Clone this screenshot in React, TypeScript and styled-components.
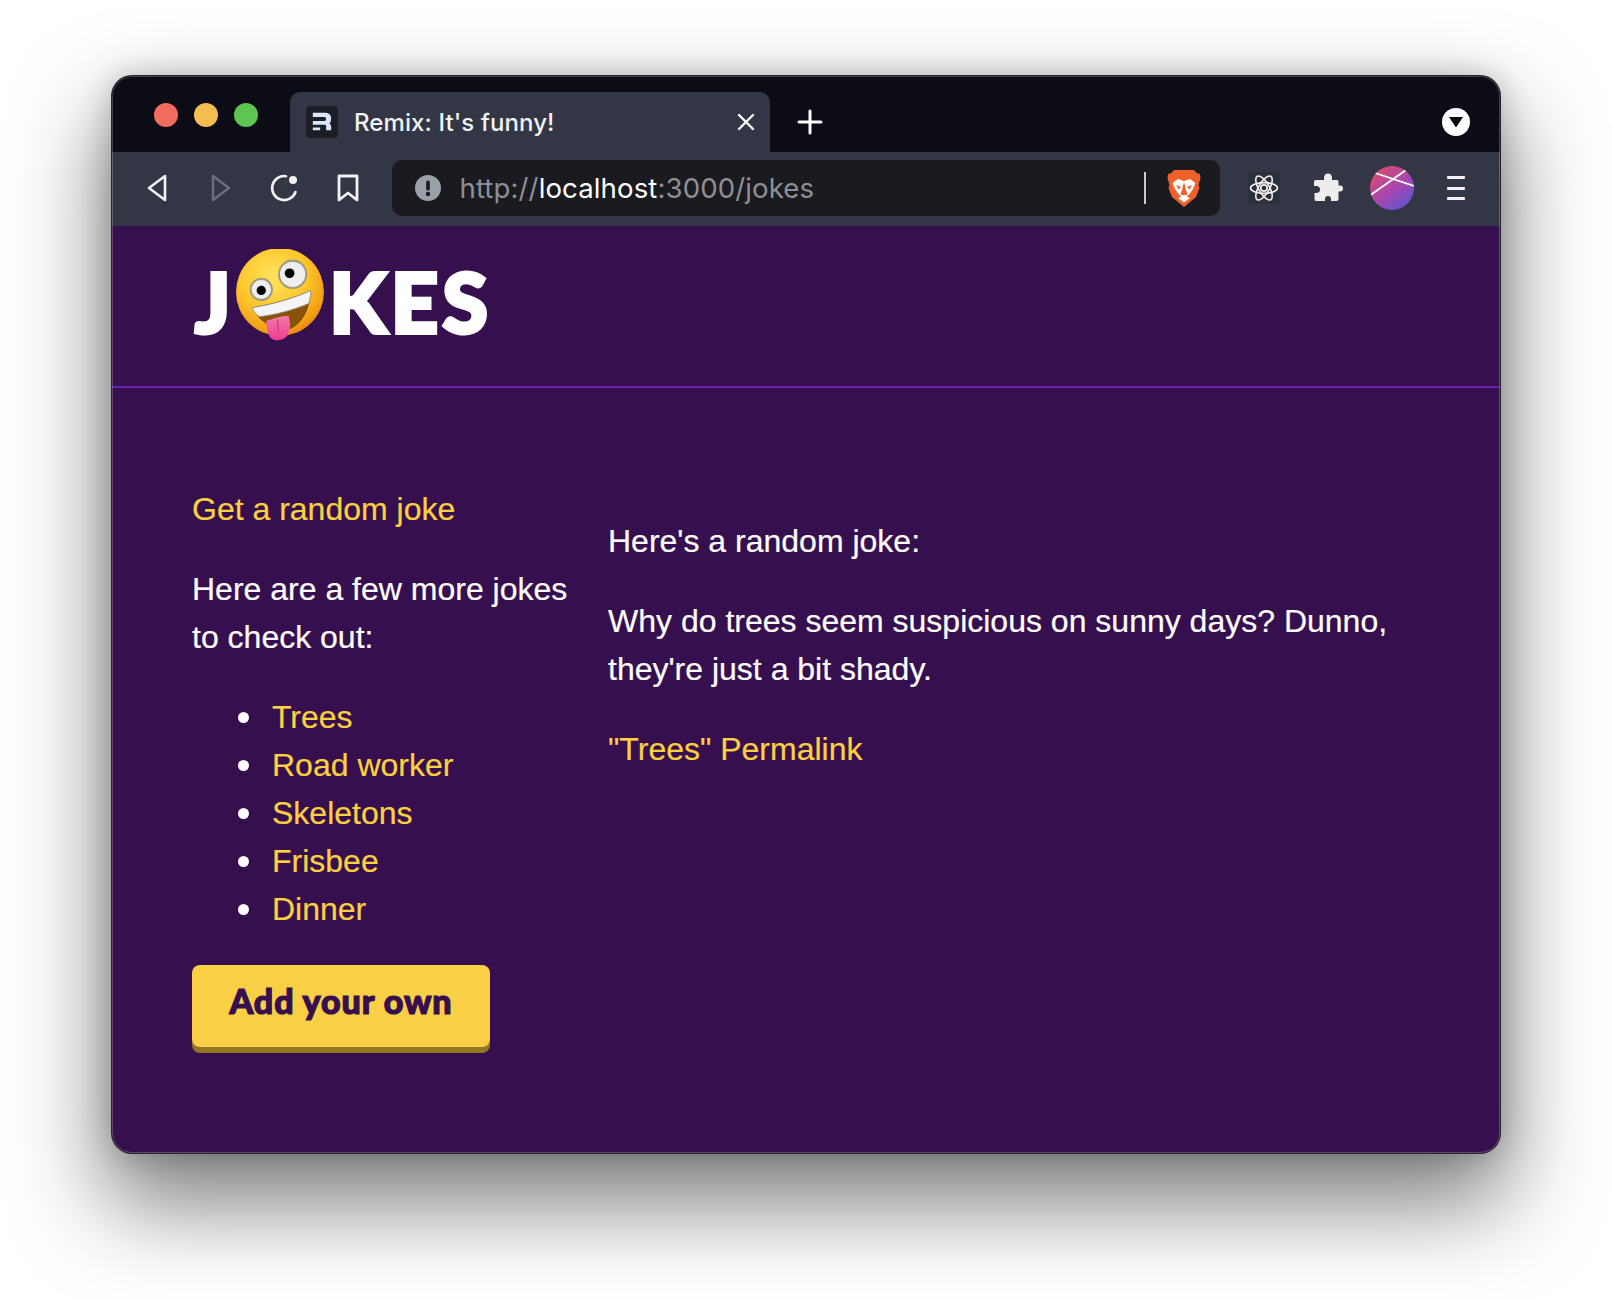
import React from "react";
import styled, { createGlobalStyle } from "styled-components";

const Global = createGlobalStyle`
  html, body { margin: 0; padding: 0; background: #fff; }
  body { font-family: "Liberation Sans", Arial, sans-serif; }
`;

const Page = styled.div`
  width: 1612px;
  height: 1300px;
  padding: 76px 112px 0;
  box-sizing: border-box;
  overflow: hidden;
`;

const Win = styled.div`
  width: 1388px;
  height: 1077px;
  border-radius: 20px;
  background: #360f4f;
  overflow: hidden;
  display: flex;
  flex-direction: column;
  position: relative;
  box-shadow: 0 0 0 1px #26262a, 0 44px 90px 8px rgba(0, 0, 0, 0.5), 0 0 30px rgba(0, 0, 0, 0.22);
  &::after {
    content: "";
    position: absolute;
    inset: 0;
    border-radius: 20px;
    box-shadow: inset 0 0 0 1px rgba(255, 255, 255, 0.22);
    pointer-events: none;
  }
`;

const TabBar = styled.div`
  height: 76px;
  flex: none;
  background: #0b0c15;
  display: flex;
  align-items: flex-end;
  position: relative;
`;

const Lights = styled.div`
  width: 178px;
  height: 76px;
  flex: none;
  display: flex;
  align-items: flex-start;
  gap: 16px;
  padding: 27px 0 0 42px;
  box-sizing: border-box;
`;

const Light = styled.span<{ $c: string }>`
  width: 24px;
  height: 24px;
  border-radius: 50%;
  background: ${(p) => p.$c};
`;

const Tab = styled.div`
  width: 480px;
  height: 60px;
  flex: none;
  background: #333644;
  border-radius: 10px 10px 0 0;
  display: flex;
  align-items: center;
  padding: 0 14px 0 16px;
  box-sizing: border-box;
  color: #fff;
`;

const Favicon = styled.div`
  width: 32px;
  height: 32px;
  border-radius: 4px;
  background: #1c1e26;
  margin-right: 16px;
  flex: none;
  display: flex;
  align-items: center;
  justify-content: center;
`;

const TabTitle = styled.div`
  flex: 1;
  font-family: "Inter", sans-serif;
  font-size: 24px;
  font-weight: 500;
  letter-spacing: 0.1px;
  color: #f2f3f6;
`;

const NewTab = styled.div`
  width: 38px;
  height: 60px;
  margin-left: 21px;
  display: flex;
  align-items: center;
  justify-content: center;
`;

const TabMenu = styled.div`
  position: absolute;
  right: 30px;
  top: 32px;
  width: 28px;
  height: 28px;
  border-radius: 50%;
  background: #fff;
  display: flex;
  align-items: center;
  justify-content: center;
`;

const Toolbar = styled.div`
  height: 74px;
  flex: none;
  background: #333644;
  display: flex;
  align-items: center;
  padding: 0 28px 2px 29px;
  box-sizing: border-box;
  gap: 31.5px;
`;

const Slot = styled.div`
  width: 32px;
  height: 44px;
  flex: none;
  display: flex;
  align-items: center;
  justify-content: center;
`;

const UrlBar = styled.div`
  flex: none;
  width: 828px;
  height: 56px;
  margin: 0 -3.5px;
  background: #1a1b20;
  border-radius: 10px;
  display: flex;
  align-items: center;
  padding: 0 19px 0 23px;
  box-sizing: border-box;
`;

const UrlText = styled.div`
  flex: 1;
  margin-left: 19px;
  font-family: "Inter", sans-serif;
  font-size: 27.6px;
  color: #8e9096;
  white-space: nowrap;
  letter-spacing: 0.1px;
`;

const Host = styled.span`
  color: #fff;
`;

const UrlDivider = styled.div`
  width: 2px;
  height: 32px;
  background: #c9cacd;
  margin-right: 21px;
`;

const Extensions = styled.div`
  display: flex;
  align-items: center;
  gap: 32px;
  margin-left: auto;
`;

const ReactBox = styled(Slot)`
  height: 32px;
  background: #2c2f3c;
  border-radius: 4px;
`;

const SiteHeader = styled.header`
  height: 162px;
  flex: none;
  box-sizing: border-box;
  border-bottom: 2px solid #6a1fb0;
  padding: 22px 0 0 80px;
`;

const Logo = styled.div`
  display: flex;
  align-items: center;
  height: 94px;
  color: #fff;
  font-family: "Lato", sans-serif;
  font-weight: 900;
  font-size: 82px;
  line-height: 92px;
  -webkit-text-stroke: 4px #fff;
`;

const LogoJ = styled.span`
  margin: 12px 5px 0 3px;
`;

const LogoRest = styled.span`
  margin: 12px 0 0 1px;
  letter-spacing: 4.5px;
`;

const Main = styled.main`
  display: grid;
  grid-template-columns: 384px 1fr;
  column-gap: 32px;
  padding: 97px 80px 0;
  font-size: 32px;
  line-height: 48px;
  color: #fff;
  -webkit-text-stroke: 0.2px currentColor;
`;

const Side = styled.div``;
const Col = styled.div`
  padding-top: 32px;
`;

const Link = styled.a`
  color: #fbd13f;
  text-decoration: none;
`;

const Para = styled.p<{ $first?: boolean }>`
  margin: ${(p) => (p.$first ? 0 : "32px 0 0")};
`;

const JokeList = styled.ul`
  margin: 32px 0 0;
  padding: 0 0 0 46px;
  list-style: none;
`;

const JokeItem = styled.li`
  display: flex;
  align-items: center;
  &::before {
    content: "";
    width: 11px;
    height: 11px;
    margin-right: 23px;
    border-radius: 50%;
    background: #fff;
  }
`;

const AddButton = styled.a`
  display: flex;
  align-items: center;
  justify-content: center;
  width: 298px;
  height: 82px;
  box-sizing: border-box;
  padding-bottom: 10px;
  margin-top: 32px;
  border-radius: 8px;
  background: #f9cf45;
  box-shadow: 0 6px 0 #937824;
  color: #360f4f;
  font-family: "Lato", sans-serif;
  font-weight: 900;
  font-size: 34px;
  letter-spacing: 0.9px;
  line-height: 1;
  -webkit-text-stroke: 1.2px #360f4f;
`;

const Face = () => (
  <svg width="93" height="93" viewBox="0 0 92 92" style={{ flex: "none" }}>
    <defs>
      <radialGradient id="fg" cx="42%" cy="33%" r="70%">
        <stop offset="0" stopColor="#ffe45e" />
        <stop offset="0.55" stopColor="#fdc62b" />
        <stop offset="0.88" stopColor="#f29f14" />
        <stop offset="1" stopColor="#e4830f" />
      </radialGradient>
      <linearGradient id="tg" x1="0" y1="0" x2="0" y2="1">
        <stop offset="0" stopColor="#f07ba8" />
        <stop offset="1" stopColor="#f23a8e" />
      </linearGradient>
    </defs>
    <circle cx="44.5" cy="42.5" r="43.5" fill="url(#fg)" />
    <path d="M18 58 C36 55 58 49 74 42 C74 60 66 72 56 78 C46 82 26 76 18 58 Z" fill="#8a5206" stroke="#7a4303" strokeWidth="1" />
    <path d="M17 58 C36 55 58 49 75 41 C75 46 74 50 73 54 C56 61 40 65 24 67 C20 64 18 61 17 58 Z" fill="#f4f4f4" stroke="#8c8c8c" strokeWidth="0.8" />
    <path d="M31 71 C38 69 46 66 53 66 C55 74 55 80 52 85 C48 92 37 92 34 86 C32 81 31 76 31 71 Z" fill="url(#tg)" />
    <path d="M42 70 L43 82" stroke="#d62a76" strokeWidth="1" fill="none" />
    <circle cx="26" cy="40" r="10.5" fill="#eee" stroke="#a39a80" strokeWidth="2" />
    <circle cx="26" cy="41" r="4.6" fill="#000" />
    <circle cx="57" cy="25" r="13.5" fill="#eee" stroke="#a39a80" strokeWidth="2" />
    <circle cx="54" cy="24" r="4.8" fill="#000" />
  </svg>
);

const Brave = () => (
  <svg width="34" height="38" viewBox="0 0 34 38" style={{ flex: "none" }}>
    <path d="M7 1 H27 L29.5 4 L33 5 L33.5 9 L31.5 16 L32.5 19 L29 28 L17 38 L5 28 L1.5 19 L2.5 16 L0.5 9 L1 5 L4.5 4 Z" fill="#f0602a" />
    <path d="M5.5 14 L11 10 L17 12 L23 10 L28.5 14 L26 20 L22.5 25 L20 27 L14 27 L11.5 25 L8 20 Z" fill="#fff" />
    <path d="M17 13 L15 21 L13.5 25 L14.5 26 H19.5 L20.5 25 L19 21 Z" fill="#f0602a" />
    <path d="M9 16 L14 18 L11.5 20.5 Z M25 16 L20 18 L22.5 20.5 Z" fill="#f0602a" />
    <path d="M11 29 L17 26 L23 29 L17 33.5 Z" fill="#fff" />
  </svg>
);

const Atom = () => (
  <svg width="30" height="30" viewBox="-15 -15 30 30" fill="none" stroke="#f0f0f0" strokeWidth="1.6">
    <ellipse rx="13.5" ry="5.4" />
    <ellipse rx="13.5" ry="5.4" transform="rotate(60)" />
    <ellipse rx="13.5" ry="5.4" transform="rotate(120)" />
    <circle r="3.2" fill="none" strokeWidth="1.8" />
  </svg>
);

const Avatar = () => (
  <svg width="44" height="44" viewBox="0 0 44 44" style={{ flex: "none" }}>
    <defs>
      <linearGradient id="av" x1="0.15" y1="0.1" x2="0.8" y2="0.95">
        <stop offset="0" stopColor="#d74a6e" />
        <stop offset="0.55" stopColor="#a846b4" />
        <stop offset="1" stopColor="#5d55c8" />
      </linearGradient>
      <clipPath id="avc"><circle cx="22" cy="22" r="22" /></clipPath>
    </defs>
    <circle cx="22" cy="22" r="22" fill="url(#av)" />
    <g clipPath="url(#avc)" stroke="#fff" strokeWidth="1.8">
      <path d="M-1 30 L36 4" />
      <path d="M5 7 L44 20" />
    </g>
  </svg>
);

export default function App() {
  return (
    <Page>
      <Global />
      <Win>
        <TabBar>
          <Lights>
            <Light $c="#f26d60" />
            <Light $c="#f5bd4f" />
            <Light $c="#5ec552" />
          </Lights>
          <Tab>
            <Favicon>
              <svg width="22" height="22" viewBox="0 0 24 22" fill="#dbe6fb">
                <path d="M2 1 H15 Q22 1 22 7.5 Q22 11 20 12.5 Q22 13.5 22 16 V20 H16.5 V15.5 Q16.5 14 15 14 H2 V10 H14.5 Q16.5 10 16.5 8 Q16.5 5.5 14.5 5.5 H2 Z" />
                <rect x="2" y="17" width="8" height="3" />
              </svg>
            </Favicon>
            <TabTitle>Remix: It's funny!</TabTitle>
            <svg width="20" height="20" viewBox="0 0 20 20" stroke="#fff" strokeWidth="2.4" strokeLinecap="round">
              <path d="M3 3 L17 17 M17 3 L3 17" />
            </svg>
          </Tab>
          <NewTab>
            <svg width="26" height="26" viewBox="0 0 26 26" stroke="#fff" strokeWidth="3" strokeLinecap="round">
              <path d="M13 2 V24 M2 13 H24" />
            </svg>
          </NewTab>
          <TabMenu>
            <svg width="16" height="12" viewBox="0 0 16 12"><path d="M1 1 H15 L8 11.5 Z" fill="#0b0c15" /></svg>
          </TabMenu>
        </TabBar>
        <Toolbar>
          <Slot>
            <svg width="22" height="28" viewBox="0 0 22 28" fill="none" stroke="#f2f2f2" strokeWidth="2.6" strokeLinejoin="round">
              <path d="M19 2 V26 L3 14 Z" />
            </svg>
          </Slot>
          <Slot>
            <svg width="22" height="28" viewBox="0 0 22 28" fill="none" stroke="#6b6e7b" strokeWidth="2.6" strokeLinejoin="round">
              <path d="M3 2 V26 L19 14 Z" />
            </svg>
          </Slot>
          <Slot>
            <svg width="30" height="30" viewBox="0 0 30 30" fill="none" stroke="#f2f2f2" strokeWidth="2.6" strokeLinecap="round">
              <path d="M26.5 19 A12 12 0 1 1 17 3.2" />
              <circle cx="24" cy="7" r="4" fill="#f2f2f2" stroke="none" />
            </svg>
          </Slot>
          <Slot>
            <svg width="22" height="28" viewBox="0 0 22 28" fill="none" stroke="#f2f2f2" strokeWidth="2.8" strokeLinejoin="round">
              <path d="M2 2 H20 V26 L11 19 L2 26 Z" />
            </svg>
          </Slot>
          <UrlBar>
            <svg width="26" height="26" viewBox="0 0 26 26" style={{ flex: "none" }}>
              <circle cx="13" cy="13" r="13" fill="#9aa0a6" />
              <rect x="11.2" y="5.5" width="3.6" height="10" rx="1.6" fill="#1a1b20" />
              <circle cx="13" cy="19" r="2.2" fill="#1a1b20" />
            </svg>
            <UrlText>
              http://<Host>localhost</Host>:3000/jokes
            </UrlText>
            <UrlDivider />
            <Brave />
          </UrlBar>
          <Extensions>
            <ReactBox><Atom /></ReactBox>
            <Slot>
              <svg width="30" height="30" viewBox="0 0 30 30" fill="#ededed">
                <path d="M11 5.5 Q11 0.5 15 0.5 Q19 0.5 19 5.5 V7 H24 Q25.5 7 25.5 8.5 V12.5 H27 Q30 12.5 30 15.5 Q30 18.5 27 18.5 H25.5 V26 Q25.5 28 23.5 28 H18 V26 Q18 23 15 23 Q12 23 12 26 V28 H3 Q1.5 28 1.5 26 V20 H3 Q7 20 7 16.5 Q7 13 3 13 H1 V8.5 Q1 7 3 7 H11 Z" />
              </svg>
            </Slot>
            <Slot><Avatar /></Slot>
            <Slot>
              <svg width="20" height="26" viewBox="0 0 20 26" fill="#f2f2f2">
                <rect x="1" y="1" width="18" height="3" rx="1" />
                <rect x="1" y="12" width="18" height="3" rx="1" />
                <rect x="1" y="22" width="18" height="3" rx="1" />
              </svg>
            </Slot>
          </Extensions>
        </Toolbar>
        <SiteHeader>
          <Logo>
            <LogoJ>J</LogoJ>
            <Face />
            <LogoRest>KES</LogoRest>
          </Logo>
        </SiteHeader>
        <Main>
          <Side>
            <Link>Get a random joke</Link>
            <Para>Here are a few more jokes to check out:</Para>
            <JokeList>
              {["Trees", "Road worker", "Skeletons", "Frisbee", "Dinner"].map((j) => (
                <JokeItem key={j}><Link>{j}</Link></JokeItem>
              ))}
            </JokeList>
            <AddButton>Add your own</AddButton>
          </Side>
          <Col>
            <Para $first>Here's a random joke:</Para>
            <Para>Why do trees seem suspicious on sunny days? Dunno, they're just a bit shady.</Para>
            <Para><Link>"Trees" Permalink</Link></Para>
          </Col>
        </Main>
      </Win>
    </Page>
  );
}
